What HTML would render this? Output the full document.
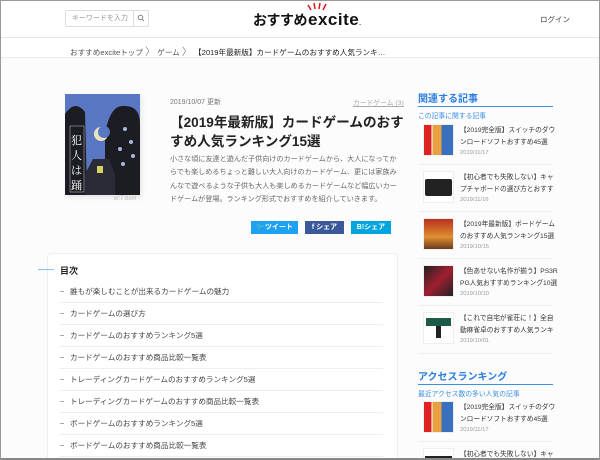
<!DOCTYPE html>
<html><head><meta charset="utf-8"><style>
*{margin:0;padding:0;box-sizing:border-box}
html,body{width:600px;height:460px;overflow:hidden}
body{background:#fff;font-family:"Liberation Sans","Noto Sans CJK JP",sans-serif;color:#333;position:relative}
.frame{position:absolute;left:0;top:0;width:600px;height:460px;border:1px solid #999;border-bottom:2px solid #888;pointer-events:none;z-index:10}
.a{position:absolute;white-space:nowrap}
.hdr{position:absolute;left:0;top:0;width:600px;height:38px;border-bottom:1px solid #e6e6e6;background:#fff}
.bc{position:absolute;left:0;top:38px;width:600px;height:20px;background:#fff;border-bottom:1px solid #ececec}
.main{position:absolute;left:0;top:58px;width:600px;height:402px;background:#fcfcfc}
.toc{position:absolute;left:47px;top:253px;width:351px;height:220px;background:#fff;border:1px solid #eee;border-radius:4px}
.ti{position:absolute;left:59px;width:324px;height:22px;border-bottom:1px solid #eee;font-size:7.6px;color:#444;line-height:22px;padding-left:11px}
.ti:before{content:"";position:absolute;left:1px;top:10px;width:4px;height:1px;background:#aaa}
.th{position:absolute;left:423px;width:31px;height:32px;border:1px solid #eee;background:#fff;overflow:hidden}
.st{position:absolute;left:460px;font-size:6.7px;line-height:12px;color:#333;white-space:nowrap}
.sd{position:absolute;left:460px;font-size:5.8px;color:#999}
.sep{position:absolute;left:418px;width:135px;height:1px;background:#f0f0f0}
.btn{position:absolute;top:221px;height:13px;color:#fff;font-size:7px;font-weight:bold;line-height:13px;text-align:center}
</style></head><body>
<div class="main"></div>
<div class="hdr"></div>
<div class="a" style="left:65px;top:10px;width:84px;height:17px;border:1px solid #ddd;border-radius:2px"></div>
<div class="a" style="left:133px;top:10px;width:1px;height:17px;background:#ddd"></div>
<div class="a" style="left:72px;top:13px;font-size:7px;color:#999">キーワードを入力</div>
<svg class="a" style="left:137px;top:14px" width="8" height="8" viewBox="0 0 8 8"><circle cx="3.5" cy="3.5" r="2.3" fill="none" stroke="#888" stroke-width="1"/><line x1="5.2" y1="5.2" x2="7" y2="7" stroke="#888"/></svg>
<div class="a" style="left:253px;top:10px;font-size:14px;font-weight:bold;color:#111;letter-spacing:-0.5px">おすすめ<span style="font-size:17px;letter-spacing:0.5px;margin-left:1px">excite</span><span style="font-size:6px">.</span></div>
<svg class="a" style="left:306px;top:2px" width="22" height="10" viewBox="0 0 22 10"><g stroke="#e0131d" stroke-width="1.5"><line x1="2" y1="3" x2="5" y2="8"/><line x1="8" y1="1" x2="9" y2="7"/><line x1="14" y1="1" x2="13" y2="7"/><line x1="20" y1="2" x2="17" y2="8"/></g></svg>
<div class="a" style="left:540px;top:14px;font-size:7.5px;color:#444">ログイン</div>
<div class="bc"></div>
<div class="a" style="left:70px;top:43px;font-size:7.6px;color:#555">おすすめexciteトップ <span style="color:#888;font-size:10px">〉</span> ゲーム <span style="color:#888;font-size:10px">〉</span> <span style="color:#222">【2019年最新版】カードゲームのおすすめ人気ランキ…</span></div>

<div class="a" style="left:67px;top:96px;width:75px;height:102px;background:#e8e8e8;filter:blur(2px)"></div>
<svg class="a" style="left:65px;top:94px" width="75" height="101" viewBox="0 0 75 101">
<rect width="75" height="101" fill="#5a77c4"/>
<path d="M0 20 Q10 5 20 18 L22 101 L0 101Z" fill="#1c1d22"/>
<path d="M40 101 L40 40 Q45 10 60 12 Q75 12 75 30 L75 101Z" fill="#1c1d22"/>
<path d="M20 101 L20 80 L28 65 L44 65 L50 80 L50 101Z" fill="#2a2b36"/>
<circle cx="36" cy="40" r="7" fill="#e8e4c0"/><circle cx="39" cy="38" r="6" fill="#5a77c4"/>
<rect x="32" y="72" width="6" height="7" fill="#d8d060"/>
<rect x="5" y="32" width="14" height="66" fill="#1c1d22" stroke="#ccc" stroke-width="0.5"/>
<text x="6" y="50" font-size="11" fill="#fff" font-family="Noto Serif CJK SC,serif">犯</text>
<text x="6" y="65" font-size="11" fill="#fff" font-family="Noto Serif CJK SC,serif">人</text>
<text x="6" y="80" font-size="11" fill="#fff" font-family="Noto Serif CJK SC,serif">は</text>
<text x="6" y="95" font-size="11" fill="#fff" font-family="Noto Serif CJK SC,serif">踊</text>
<g fill="#a9b8e0"><circle cx="60" cy="35" r="2"/><circle cx="66" cy="48" r="2"/><circle cx="55" cy="55" r="2"/><circle cx="68" cy="62" r="2"/><circle cx="58" cy="70" r="2"/></g>
</svg>
<div class="a" style="left:114px;top:196px;font-size:6px;color:#bbb">w:7.6cm</div>

<div class="a" style="left:170px;top:97px;font-size:7px;color:#777">2019/10/07 更新</div>
<div class="a" style="left:353px;top:97px;font-size:6.8px;color:#aaa;text-decoration:underline">カードゲーム (3)</div>
<div class="a" style="left:170px;top:113px;font-size:13.6px;font-weight:bold;line-height:19px;color:#222">【2019年最新版】カードゲームのおす<br>すめ人気ランキング15選</div>
<div class="a" style="left:170px;top:153px;font-size:7.1px;line-height:13.3px;color:#666">小さな頃に友達と遊んだ子供向けのカードゲームから、大人になってか<br>らでも楽しめるちょっと難しい大人向けのカードゲーム、更には家族み<br>んなで遊べるような子供も大人も楽しめるカードゲームなど幅広いカー<br>ドゲームが登場。ランキング形式でおすすめを紹介していきます。</div>
<div class="btn" style="left:251px;width:47px;background:#1da1f2">🐦ツイート</div>
<div class="btn" style="left:305px;width:39px;background:#3b5998">f シェア</div>
<div class="btn" style="left:351px;width:40px;background:#00a4de">B!シェア</div>

<div class="toc"></div>
<div class="a" style="left:38px;top:269px;width:16px;height:1px;background:#8cc0f0"></div>
<div class="a" style="left:60px;top:264px;font-size:9px;font-weight:bold;color:#222">目次</div>
<div class="ti" style="top:281px">誰もが楽しむことが出来るカードゲームの魅力</div>
<div class="ti" style="top:303px">カードゲームの選び方</div>
<div class="ti" style="top:325px">カードゲームのおすすめランキング5選</div>
<div class="ti" style="top:347px">カードゲームのおすすめ商品比較一覧表</div>
<div class="ti" style="top:369px">トレーディングカードゲームのおすすめランキング5選</div>
<div class="ti" style="top:391px">トレーディングカードゲームのおすすめ商品比較一覧表</div>
<div class="ti" style="top:413px">ボードゲームのおすすめランキング5選</div>
<div class="ti" style="top:435px">ボードゲームのおすすめ商品比較一覧表</div>

<div class="a" style="left:418px;top:90px;font-size:10px;font-weight:bold;color:#2a7de1">関連する記事</div>
<div class="a" style="left:418px;top:106px;width:135px;height:1px;background:#3a8ee6"></div>
<div class="a" style="left:418px;top:110px;font-size:6.8px;color:#3a8ee6">この記事に関する記事</div>

<div class="th" style="top:124px;background:linear-gradient(90deg,#d22 0 25%,#fff 25% 30%,#e9a040 30% 60%,#3a70c0 60%)"></div>
<div class="st" style="top:125px">【2019完全版】スイッチのダウ<br>ンロードソフトおすすめ45選</div><div class="sd" style="top:150px">2019/11/17</div>
<div class="sep" style="top:164px"></div>
<div class="th" style="top:171px"><div style="margin:7px 1px;height:17px;background:#222;border-radius:2px"></div></div>
<div class="st" style="top:172px">【初心者でも失敗しない】キャ<br>プチャボードの選び方とおすす</div><div class="sd" style="top:197px">2019/11/16</div>
<div class="sep" style="top:211px"></div>
<div class="th" style="top:218px;background:linear-gradient(#b83020,#e09030 60%,#6a3a20)"></div>
<div class="st" style="top:219px">【2019年最新版】ボードゲーム<br>のおすすめ人気ランキング15選</div><div class="sd" style="top:244px">2019/10/15</div>
<div class="sep" style="top:258px"></div>
<div class="th" style="top:265px;background:linear-gradient(135deg,#222,#a02030 50%,#222)"></div>
<div class="st" style="top:266px">【色あせない名作が揃う】PS3R<br>PG人気おすすめランキング10選</div><div class="sd" style="top:291px">2019/10/10</div>
<div class="sep" style="top:305px"></div>
<div class="th" style="top:312px"><div style="margin:5px 2px 0;height:8px;background:#1e5a4a"></div><div style="margin:0 12px;height:12px;background:#222"></div></div>
<div class="st" style="top:313px">【これで自宅が雀荘に！】全自<br>動麻雀卓のおすすめ人気ランキ</div><div class="sd" style="top:338px">2019/10/01</div>
<div class="sep" style="top:353px"></div>

<div class="a" style="left:418px;top:368px;font-size:10px;font-weight:bold;color:#2a7de1">アクセスランキング</div>
<div class="a" style="left:418px;top:384px;width:135px;height:1px;background:#3a8ee6"></div>
<div class="a" style="left:418px;top:388px;font-size:6.8px;color:#3a8ee6">最近アクセス数の多い人気の記事</div>
<div class="th" style="top:401px;background:linear-gradient(90deg,#d22 0 25%,#fff 25% 30%,#e9a040 30% 60%,#3a70c0 60%)"></div>
<div class="st" style="top:402px">【2019完全版】スイッチのダウ<br>ンロードソフトおすすめ45選</div><div class="sd" style="top:427px">2019/11/17</div>
<div class="sep" style="top:441px"></div>
<div class="th" style="top:448px"><div style="margin:7px 1px;height:17px;background:#222"></div></div>
<div class="st" style="top:449px">【初心者でも失敗しない】キャ</div>
<div class="frame"></div>
</body></html>
